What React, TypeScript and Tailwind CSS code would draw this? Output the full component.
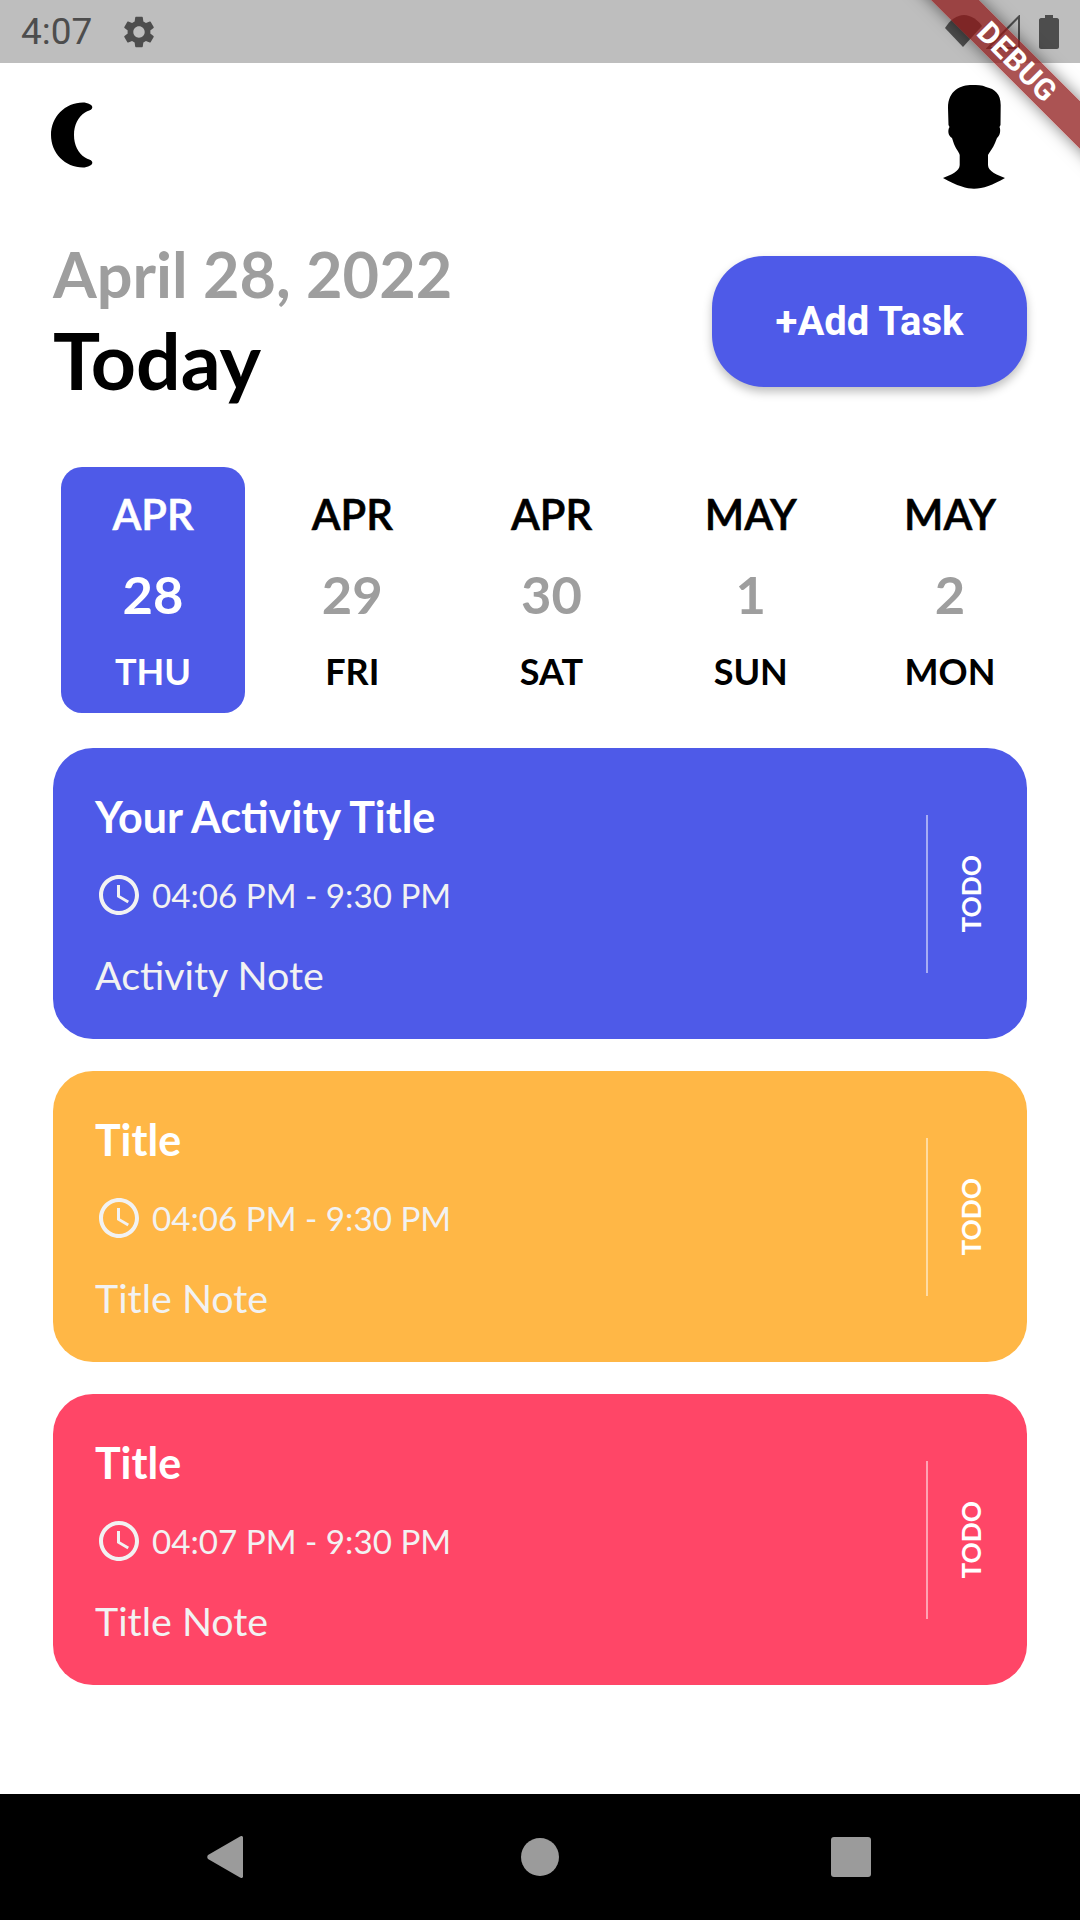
import React from 'react';
import { MdAccessTime } from 'react-icons/md';

const days = [
  { month: 'APR', day: '28', week: 'THU', active: true },
  { month: 'APR', day: '29', week: 'FRI' },
  { month: 'APR', day: '30', week: 'SAT' },
  { month: 'MAY', day: '1', week: 'SUN' },
  { month: 'MAY', day: '2', week: 'MON' },
];

const tasks = [
  { title: 'Your Activity Title', time: '04:06 PM - 9:30 PM', note: 'Activity Note', bg: 'bg-[#4e5ae8]' },
  { title: 'Title', time: '04:06 PM - 9:30 PM', note: 'Title Note', bg: 'bg-[#ffb746]' },
  { title: 'Title', time: '04:07 PM - 9:30 PM', note: 'Title Note', bg: 'bg-[#ff4667]' },
];

function StatusBar() {
  return (
    <div className="h-[63px] shrink-0 bg-[#bebebe] flex items-center pl-[21px] pr-[21px] justify-between">
      <div className="flex items-center gap-[28px]">
        <span className="text-[37px] leading-none text-[#4d4d4d] font-['Roboto',sans-serif]">4:07</span>
        <svg width="38" height="38" viewBox="0 0 24 24" fill="#4d4d4d">
          <path d="M19.14 12.94c.04-.3.06-.61.06-.94 0-.32-.02-.64-.07-.94l2.03-1.58a.49.49 0 0 0 .12-.61l-1.92-3.32a.488.488 0 0 0-.59-.22l-2.39.96c-.5-.38-1.03-.7-1.62-.94l-.36-2.54a.484.484 0 0 0-.48-.41h-3.84c-.24 0-.43.17-.47.41l-.36 2.54c-.59.24-1.13.57-1.62.94l-2.39-.96c-.22-.08-.47 0-.59.22L2.74 8.87c-.12.21-.08.47.12.61l2.03 1.58c-.05.3-.09.63-.09.94s.02.64.07.94l-2.03 1.58a.49.49 0 0 0-.12.61l1.92 3.32c.12.22.37.29.59.22l2.39-.96c.5.38 1.03.7 1.62.94l.36 2.54c.05.24.24.41.48.41h3.84c.24 0 .44-.17.47-.41l.36-2.54c.59-.24 1.13-.56 1.62-.94l2.39.96c.22.08.47 0 .59-.22l1.92-3.32c.12-.22.07-.47-.12-.61l-2.01-1.58zM12 15.6c-1.98 0-3.6-1.62-3.6-3.6s1.62-3.6 3.6-3.6 3.6 1.62 3.6 3.6-1.62 3.6-3.6 3.6z" />
        </svg>
      </div>
      <div className="flex items-center">
        <svg width="38" height="33" viewBox="0 0 38 33" fill="#4d4d4d">
          <path d="M18 32 L0 13 C5 5 12 0 19 0 C26 0 33 5 37 11 Z" />
        </svg>
        <svg width="34" height="34" viewBox="0 0 34 34" fill="none" stroke="#4d4d4d" strokeWidth="2" className="ml-[3px]">
          <path d="M33 1.5 L33 33 L2 33 Z" />
        </svg>
        <svg width="20" height="34" viewBox="0 0 20 34" fill="#4d4d4d" className="ml-[19px]">
          <path d="M6 0 H14 V3 H18 C19 3 20 4 20 5 V32 C20 33 19 34 18 34 H2 C1 34 0 33 0 32 V5 C0 4 1 3 2 3 H6 Z" />
        </svg>
      </div>
    </div>
  );
}

function Header() {
  return (
    <div className="h-[127px] shrink-0 pl-[50px] pr-[71px] flex items-center justify-between">
      <svg width="44" height="66" viewBox="0 0 44 66" className="mt-[17px]">
        <path d="M33 0.5 C37 0.5 44 3 42 6.5 C41 8.5 38 8.5 35 10.5 C28 15 24 23 24 33 C24 43 28 51 35 55.5 C38 57.5 41 57.5 42 59.5 C44 63 37 65.5 33 65.5 C15 65.5 1 51 1 33 C1 15 15 0.5 33 0.5 Z" fill="#000" />
      </svg>
      <svg width="70" height="112" viewBox="0 0 70 112" className="mt-[19px]">
        <path d="M33 5 C22 5 9 10 9 28 L9.5 45 L10.5 47 C8.5 50 9 56 13 58 L15 64 C17 69 20 72 20.7 75 L20.7 85 C20.7 91 12 95 4 98 C18 106 28 108.7 35 108.7 C44 108.7 54 105 66 98 C58 95 49 91 49 85 L49 75 C51 71 54 68 56 63 L58 58 C61 56 62 50 60.5 47 L61.5 45 L61.7 25 C61.7 14 56 9 47 7 C43 5 38 5 33 5 Z" fill="#000" />
      </svg>
    </div>
  );
}

function TaskCard({ title, time, note, bg }: { title: string; time: string; note: string; bg: string }) {
  return (
    <div className={`${bg} h-[291px] rounded-[40px] flex items-center pl-[42px] pr-[13px] text-white font-['Lato',sans-serif]`}>
      <div className="flex-1 flex flex-col pt-[5px]">
        <div className="text-[43px] leading-[48px] font-bold">{title}</div>
        <div className="flex items-center gap-[9px] mt-[30px] text-[#f2f2f2]">
          <MdAccessTime size={48} />
          <span className="text-[33.2px] leading-[40px]">{time}</span>
        </div>
        <div className="text-[39.4px] leading-[48px] mt-[32px] text-[#f2f2f2]">{note}</div>
      </div>
      <div className="w-[2px] h-[158px] bg-white/50" />
      <div className="w-[86px] flex justify-center">
        <span className="[writing-mode:vertical-rl] rotate-180 text-[26.25px] leading-none font-bold">TODO</span>
      </div>
    </div>
  );
}

export default function App() {
  return (
    <div className="relative w-[1080px] h-[1920px] bg-white overflow-hidden flex flex-col font-['Lato',sans-serif]">
      <StatusBar />
      <Header />

      <div className="shrink-0 mt-[47px] pl-[53px] pr-[53px] flex items-center justify-between">
        <div className="flex flex-col">
          <div className="text-[63px] leading-[74px] font-bold text-[#9e9e9e]">April 28, 2022</div>
          <div className="mt-[3px] text-[78.75px] leading-[92px] font-bold text-black">Today</div>
        </div>
        <button className="w-[315px] h-[131px] rounded-[52px] bg-[#4e5ae8] text-white text-[40px] font-bold font-['Roboto',sans-serif] shadow-[0_5px_10px_rgba(0,0,0,0.25)]">
          +Add Task
        </button>
      </div>

      <div className="shrink-0 mt-[61px] pl-[61px] pr-[38px] flex justify-between">
        {days.map((d) => (
          <div
            key={d.day}
            className={`w-[184px] h-[246px] rounded-[21px] flex flex-col items-center ${d.active ? 'bg-[#4e5ae8] text-white' : 'bg-white text-black'}`}
          >
            <div className="mt-[22px] text-[42px] leading-[50px] font-semibold [-webkit-text-stroke:0.6px_currentColor]">{d.month}</div>
            <div className={`mt-[25px] text-[52.5px] leading-[60px] font-bold ${d.active ? 'text-white' : 'text-[#9e9e9e]'}`}>{d.day}</div>
            <div className="mt-[25px] text-[36px] leading-[44px] font-bold">{d.week}</div>
          </div>
        ))}
      </div>

      <div className="shrink-0 mt-[35px] pl-[53px] pr-[53px] flex flex-col gap-[32px]">
        {tasks.map((t, i) => (
          <TaskCard key={i} {...t} />
        ))}
      </div>

      <div className="absolute left-0 right-0 bottom-0 h-[126px] bg-black flex items-center justify-between pl-[207px] pr-[209px]">
        <svg width="36" height="42" viewBox="0 0 36 42" fill="#9b9b9b">
          <path d="M36 1.5 V40.5 C36 42 34.5 42.5 33 41.5 L1 23 C0 22 0 20 1 19 L33 0.5 C34.5 -0.5 36 0 36 1.5 Z" />
        </svg>
        <div className="ml-[6px] w-[38px] h-[38px] rounded-full bg-[#9b9b9b]" />
        <div className="w-[40px] h-[40px] rounded-[3px] bg-[#9b9b9b]" />
      </div>

      {/* баннер DEBUG поверх всего */}
      <div className="absolute top-[45px] right-[-87px] w-[300px] h-[34px] rotate-45 bg-[#8f1a1a]/75 shadow-[0_0_16px_rgba(0,0,0,0.5)] flex items-center justify-center">
        <span className="text-white text-[30px] leading-none font-bold tracking-[0.5px] font-['Roboto',sans-serif]">DEBUG</span>
      </div>
    </div>
  );
}
